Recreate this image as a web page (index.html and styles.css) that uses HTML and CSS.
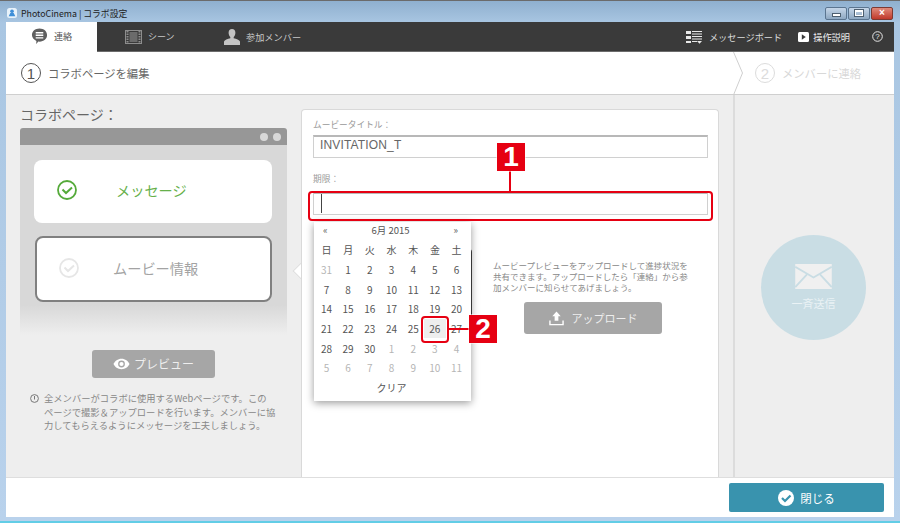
FILE: index.html
```html
<!DOCTYPE html>
<html lang="ja">
<head>
  <meta charset="utf-8"/>
  <title>PhotoCinema | コラボ設定</title>
  <link rel="stylesheet" href="styles.css">
</head>
<body>
<div class="window">
  <div class="titlebar">
    <div class="app-title">
      <svg class="app-icon" viewBox="0 0 12 12"><rect width="12" height="12" rx="3" fill="#e8f2fa"/><circle cx="6" cy="4" r="2.2" fill="#3f8fd8"/><path d="M2 10l2-4h4l2 4z" fill="#3f8fd8"/></svg>
      <span>PhotoCinema | コラボ設定</span>
    </div>
    <div class="win-buttons">
      <span class="win-btn"><i class="glyph-min"></i></span>
      <span class="win-btn"><i class="glyph-max"></i></span>
      <span class="win-btn win-close"><i>×</i></span>
    </div>
  </div>

  <div class="client">
    <nav class="tabs">
      <a class="tab tab-active tab-contact">
        <svg viewBox="0 0 18 18" width="17" height="17"><path d="M9 .5c4.6 0 8 2.900 8 7s-3.400 7-8 7c-.4 0-.8 0-1.200-.1L5.500 17l.2-3.200C3 12.500 1 10.300 1 7.500 1 3.400 4.400.5 9 .5z" fill="#5f5f5f"/><path d="M5 5h8M5 7.700h8M5 10.400h8" stroke="#fff" stroke-width="1.400"/></svg>
        連絡
      </a>
      <a class="tab tab-scene">
        <svg viewBox="0 0 17 14" width="17" height="14"><rect x=".5" y=".5" width="16" height="13" fill="#3a3a3a" stroke="#8d8d8d"/><rect x="4.500" y="2" width="8" height="10" fill="#6b6b6b"/><path d="M2.500 1v12M14.500 1v12" stroke="#8d8d8d" stroke-width="2" stroke-dasharray="1.500 1"/></svg>
        シーン
      </a>
      <a class="tab tab-member">
        <svg viewBox="0 0 16 16" width="16" height="16"><path d="M8 0c2.200 0 3.400 1.700 3.400 3.800 0 1.700-.8 3.300-1.700 4.200v1.300c2.600.6 5.800 1.800 6.300 3.300V16H0v-3.400c.5-1.500 3.700-2.700 6.300-3.300V8c-.9-.9-1.700-2.500-1.700-4.200C4.600 1.700 5.800 0 8 0z" fill="#c4c4c4"/></svg>
        参加メンバー
      </a>
      <div class="tabs-right">
        <a class="tool-link">
          <svg viewBox="0 0 16 14" width="16" height="14"><path d="M0 1h5v3H0zM0 6h5v3H0zM0 11h5v2H0z" fill="#e8e8e8"/><path d="M6 1.500h10M6 4h10M6 6.500h10M6 9h10M6 11.500h5" stroke="#e8e8e8"/><path d="M11 11h5l-2.500 2.800z" fill="#e8e8e8"/></svg>
          メッセージボード
        </a>
        <a class="tool-link tool-help">
          <svg viewBox="0 0 11 10" width="11" height="10"><rect width="11" height="10" rx="1.500" fill="#fff"/><path d="M3.800 2.300l4 2.700-4 2.700z" fill="#3a3a3a"/></svg>
          操作説明
        </a>
        <svg class="help-icon" viewBox="0 0 11 11" width="11" height="11"><circle cx="5.500" cy="5.500" r="4.800" fill="none" stroke="#e8e8e8"/><text x="5.500" y="8.300" text-anchor="middle" font-size="8" fill="#e8e8e8" font-family="Liberation Sans">?</text></svg>
      </div>
    </nav>

    <div class="steps">
      <div class="step step-now"><span class="step-num">1</span>コラボページを編集</div>
      <svg class="step-arrow" viewBox="0 0 10 43" width="10" height="43"><path d="M.5 0l9 21-9 22" fill="none" stroke="#cfcfcf"/></svg>
      <div class="step step-next"><span class="step-num">2</span>メンバーに連絡</div>
    </div>

    <main class="main">
      <section class="left">
        <h2 class="left-title">コラボページ：</h2>
        <div class="mock">
          <div class="mock-head"><i></i><i></i></div>
          <div class="mock-body">
            <div class="page-item page-done">
              <svg viewBox="0 0 20 20" width="20" height="20"><circle cx="10" cy="10" r="9" fill="none" stroke="#55aa3a" stroke-width="1.800"/><path d="M5.500 9.500l3.500 3.500 6-5.500" fill="none" stroke="#55aa3a" stroke-width="2"/></svg>
              <span>メッセージ</span>
            </div>
            <div class="page-item page-current">
              <svg viewBox="0 0 20 20" width="20" height="20"><circle cx="10" cy="10" r="9" fill="none" stroke="#e6e6e6" stroke-width="1.800"/><path d="M5.500 9.500l3.500 3.500 6-5.500" fill="none" stroke="#e6e6e6" stroke-width="2"/></svg>
              <span>ムービー情報</span>
            </div>
          </div>
        </div>
        <button class="btn btn-preview">
          <svg viewBox="0 0 18 12" width="17" height="12"><path d="M9 .5C5 .5 2 3 .5 6 2 9 5 11.500 9 11.500S16 9 17.500 6C16 3 13 .5 9 .5z" fill="#fff"/><circle cx="9" cy="6" r="3.600" fill="#a6a6a6"/><circle cx="9" cy="6" r="2.200" fill="#fff"/></svg>
          プレビュー
        </button>
        <div class="note">
          <svg viewBox="0 0 9 9" width="9" height="9"><circle cx="4.500" cy="4.500" r="3.900" fill="none" stroke="#777"/><path d="M4.500 2v3.500" stroke="#777"/></svg>
          <p>全メンバーがコラボに使用するWebページです。この<br>ページで撮影＆アップロードを行います。メンバーに協<br>力してもらえるようにメッセージを工夫しましょう。</p>
        </div>
        <i class="pointer"></i>
      </section>

      <section class="card">
        <label class="field-label">ムービータイトル：</label>
        <div class="field">INVITATION_T</div>
        <label class="field-label field-label-date">期限：</label>
        <div class="field field-date"><i class="caret"></i></div>

        <div class="upload-row">
          <div class="phone"></div>
          <div class="upload-side">
            <p>ムービープレビューをアップロードして進捗状況を共有できます。アップロードしたら「連絡」から参加メンバーに知らせてあげましょう。</p>
            <button class="btn btn-upload">
              <svg viewBox="0 0 16 15" width="15" height="15"><path d="M8 0l4.500 5H10v5H6V5H3.500z" fill="#fff"/><path d="M1 9.500V14h14V9.500" fill="none" stroke="#fff" stroke-width="1.500"/></svg>
              アップロード
            </button>
          </div>
        </div>

        <div class="calendar">
          <div class="cal-head"><span>«</span><span>6月 2015</span><span>»</span></div>
          <div class="cal-grid">
            <b>日</b><b>月</b><b>火</b><b>水</b><b>木</b><b>金</b><b>土</b>
            <span class="off">31</span><span>1</span><span>2</span><span>3</span><span>4</span><span>5</span><span>6</span>
            <span>7</span><span>8</span><span>9</span><span>10</span><span>11</span><span>12</span><span>13</span>
            <span>14</span><span>15</span><span>16</span><span>17</span><span>18</span><span>19</span><span>20</span>
            <span>21</span><span>22</span><span>23</span><span>24</span><span>25</span><span class="today">26</span><span>27</span>
            <span>28</span><span>29</span><span>30</span><span class="off">1</span><span class="off">2</span><span class="off">3</span><span class="off">4</span>
            <span class="off">5</span><span class="off">6</span><span class="off">7</span><span class="off">8</span><span class="off">9</span><span class="off">10</span><span class="off">11</span>
          </div>
          <div class="cal-clear">クリア</div>
        </div>
      </section>

      <aside class="right">
        <div class="send-all">
          <svg viewBox="0 0 38 26" width="37" height="25"><rect width="38" height="26" fill="#f0f0f0"/><path d="M0 3l19 11L38 3M0 24l12-13M38 24L26 11" fill="none" stroke="#c9dde4" stroke-width="2"/></svg>
          <span>一斉送信</span>
        </div>
      </aside>
    </main>

    <footer class="footer">
      <button class="btn-close">
        <svg viewBox="0 0 16 16" width="16" height="16"><circle cx="8" cy="8" r="8" fill="#fff"/><path d="M4 8l3 3 5.500-5.500" fill="none" stroke="#3993ae" stroke-width="2.200"/></svg>
        閉じる
      </button>
    </footer>
  </div>

  <!-- callouts drawn on top of the screenshot -->
  <div class="mark-box mark-date"></div>
  <div class="mark-line mark-line-1"></div>
  <div class="mark-num mark-num-1">1</div>
  <div class="mark-box mark-day"></div>
  <div class="mark-line mark-line-2"></div>
  <div class="mark-num mark-num-2">2</div>
</div>
</body>
</html>
```

FILE: styles.css
```css
* {
  box-sizing: border-box;
}

html, body {
  margin: 0;
  height: 100%;
  overflow: hidden;
}

body {
  font-family: "Noto Sans CJK JP", "Noto Sans", sans-serif;
  color: #555;
}

.window {
  position: relative;
  width: 900px;
  height: 523px;
  display: flex;
  flex-direction: column;
  padding: 0 6px 4px;
  background: linear-gradient(#8fb0cf 0, #a9c6e2 22px, #b9d2ec 100%);
  border-bottom: 2px solid #62cde6;
  border-top: 1px solid #6b6b6b;
}

.titlebar {
  height: 21px;
  flex: none;
  display: flex;
  align-items: center;
  justify-content: space-between;
}

.app-title {
  display: flex;
  align-items: center;
  gap: 4px;
  margin-top: 3px;
  font-size: 8.800px;
  color: #222;
}

.app-icon {
  width: 10px;
  height: 10px;
  margin-left: 1px;
}

.win-buttons {
  display: flex;
  gap: 1px;
  margin: 3px 0 0;
  padding-right: 1px;
}

.win-btn {
  width: 22px;
  height: 13px;
  display: flex;
  align-items: center;
  justify-content: center;
  border: 1px solid #5b7590;
  border-radius: 2px;
  background: linear-gradient(#c5d6e8, #8ea8c2);
}

.win-close {
  width: 22px;
  border-color: #7d3a32;
  background: linear-gradient(#e08a7a, #c0392b);
  color: #fff;
}

.win-close i {
  font: bold 10px/10px "Liberation Sans", sans-serif;
}

.glyph-min {
  width: 7px;
  height: 2px;
  margin-top: 4px;
  background: #fff;
  box-shadow: 0 0 0 1px #4d5f70;
}

.glyph-max {
  width: 8px;
  height: 6px;
  border: 1px solid #fff;
  border-top-width: 2px;
  box-shadow: 0 0 0 1px #4d5f70;
}

.client {
  flex: 1;
  min-height: 0;
  display: flex;
  flex-direction: column;
  background: #fff;
}

.tabs {
  height: 30px;
  flex: none;
  display: flex;
  background: #3a3a3a;
  border-bottom: 1px solid #6c6c6c;
  color: #c8c8c8;
  font-size: 9px;
}

.tab {
  display: flex;
  align-items: center;
  gap: 6px;
}

.tab-active {
  background: #fff;
  color: #555;
  border-bottom: 1px solid #fff;
  margin-bottom: -1px;
}

.tab-contact {
  width: 91px;
  padding-left: 25px;
}

.tab-scene {
  padding-left: 28px;
  width: 126px;
}

.tab-member {
  padding-left: 1px;
  font-size: 9.200px;
}

.tabs-right {
  margin-left: auto;
  display: flex;
  align-items: center;
  color: #ddd;
  font-size: 9.200px;
}

.tool-link {
  display: flex;
  align-items: center;
  gap: 7px;
}

.tool-help {
  margin-left: 16px;
  gap: 4px;
  color: #eee;
}

.help-icon {
  margin: 0 11px 0 22px;
}

.steps {
  height: 43px;
  flex: none;
  display: flex;
  align-items: center;
  position: relative;
  border-bottom: 1px solid #cfcfcf;
}

.step {
  display: flex;
  align-items: center;
  gap: 7px;
  font-size: 11.300px;
  color: #666;
}

.step-now {
  padding-left: 15px;
  width: 727px;
}

.step-arrow {
  flex: none;
  align-self: flex-start;
}

.step-next {
  margin-left: 12px;
  color: #d8d8d8;
}

.step-num {
  width: 20px;
  height: 20px;
  display: flex;
  align-items: center;
  justify-content: center;
  border: 1px solid #555;
  border-radius: 50%;
  font-size: 15px;
  font-family: "Liberation Sans", sans-serif;
  color: #555;
}

.step-next .step-num {
  border-color: #dcdcdc;
  color: #dcdcdc;
}

.main {
  flex: 1;
  min-height: 0;
  display: flex;
  background: #eee;
  border-bottom: 1px solid #dedede;
}

.left {
  position: relative;
  width: 295px;
  flex: none;
  padding: 10px 0 0 14px;
}

.left-title {
  margin: 0;
  font-size: 14px;
  line-height: 18px;
  font-weight: 400;
  color: #666;
}

.mock {
  width: 267px;
  margin-top: 5px;
}

.mock-head {
  height: 17px;
  display: flex;
  justify-content: flex-end;
  align-items: center;
  gap: 5px;
  padding-right: 6px;
  border-radius: 3px 3px 0 0;
  background: #979797;
}

.mock-head i {
  width: 8px;
  height: 8px;
  border-radius: 50%;
  background: #d8d8d8;
}

.mock-body {
  height: 190px;
  display: flex;
  flex-direction: column;
  gap: 13px;
  padding: 15px 15px 0 14px;
  background: linear-gradient(#d8d8d8 0, #d8d8d8 160px, #eee 100%);
}

.page-item {
  height: 63px;
  display: flex;
  align-items: center;
  padding-bottom: 3px;
  border-radius: 8px;
  background: #fff;
  font-size: 14.200px;
}

.page-item svg {
  margin-left: 23px;
}

.page-done span {
  margin-left: 39px;
  color: #66b04a;
}

.page-current {
  height: 66px;
  margin-left: 1px;
  border: 2px solid #808080;
  color: #a3a3a3;
}

.page-current span {
  margin-left: 34px;
}

.page-current svg {
  margin-left: 22px;
}

.btn {
  display: flex;
  align-items: center;
  justify-content: center;
  border: 0;
  border-radius: 3px;
  background: #a6a6a6;
  color: #eee;
  font-family: inherit;
}

.btn-preview {
  width: 123px;
  height: 28px;
  gap: 4px;
  margin: 15px 0 0 72px;
  padding-bottom: 2px;
  font-size: 12px;
}

.note {
  display: flex;
  gap: 5px;
  width: 260px;
  margin: 14px 0 0 10px;
}

.note svg {
  flex: none;
  margin-top: 2px;
}

.note p {
  margin: 0;
  font-size: 9.300px;
  line-height: 13.500px;
  color: #888;
}

.pointer {
  position: absolute;
  top: 170px;
  right: -6px;
  width: 12px;
  height: 12px;
  transform: rotate(45deg);
  background: #fff;
  border-left: 1px solid #ddd;
  border-bottom: 1px solid #ddd;
}

.card {
  position: relative;
  width: 418px;
  flex: none;
  margin-top: 14px;
  padding: 9px 10px 0 11px;
  background: #fff;
  border: 1px solid #d9d9d9;
  border-bottom: 0;
  border-radius: 4px 4px 0 0;
}

.field-label {
  display: block;
  font-size: 8.700px;
  line-height: 11px;
  color: #999;
}

.field-label-date {
  margin-top: 15px;
}

.field {
  height: 23px;
  margin-top: 5px;
  padding-left: 6px;
  border: 1px solid #d0d0d0;
  border-top: 2px solid #b8b8b8;
  font: 12px/17px "Liberation Sans", sans-serif;
  letter-spacing: .15px;
  color: #666;
}

.field-date {
  margin-top: 8px;
  padding-left: 7px;
}

.caret {
  display: block;
  width: 1px;
  height: 19px;
  background: #444;
}

.upload-row {
  display: flex;
  margin-top: 34px;
}

.phone {
  width: 134px;
  height: 90px;
  margin-left: 25px;
  flex: none;
  border: 2px solid #444;
  border-radius: 3px;
}

.upload-side {
  margin-left: 21px;
  width: 200px;
}

.upload-side p {
  margin: 11px 0 0;
  font-size: 8.500px;
  line-height: 11px;
  color: #888;
}

.btn-upload {
  width: 138px;
  height: 32px;
  gap: 8px;
  margin: 9px 0 0 31px;
  font-size: 11px;
}

.calendar {
  position: absolute;
  left: 12px;
  top: 112px;
  width: 157px;
  height: 179px;
  padding: 0 3px 0 1px;
  background: #fff;
  box-shadow: 0 2px 8px rgba(0, 0, 0, .4);
  font-size: 10px;
  color: #555;
}

.cal-head {
  height: 15px;
  padding: 0 10px 0 8px;
  display: flex;
  justify-content: space-between;
  align-items: center;
  font-size: 9.500px;
}

.cal-grid {
  display: grid;
  grid-template-columns: repeat(7, 21.700px);
  grid-auto-rows: 19.700px;
  justify-content: center;
  margin-top: 3px;
}

.cal-grid b,
.cal-grid span {
  display: flex;
  align-items: center;
  justify-content: center;
  font-weight: 400;
}

.cal-grid .off {
  color: #b5b5b5;
}

.cal-grid .today {
  background: #eee;
}

.cal-clear {
  text-align: center;
  margin-top: 2px;
}

.right {
  flex: 1;
  margin-left: 14px;
  border-left: 2px solid #dcdcdc;
  position: relative;
}

.send-all {
  position: absolute;
  left: 26px;
  top: 140px;
  width: 105px;
  height: 105px;
  display: flex;
  flex-direction: column;
  align-items: center;
  justify-content: center;
  gap: 6px;
  border-radius: 50%;
  background: #c9dde4;
  color: #eaf2f5;
  font-size: 11px;
}

.footer {
  height: 39px;
  flex: none;
  display: flex;
  justify-content: flex-end;
  align-items: center;
  padding-right: 10px;
}

.btn-close {
  width: 155px;
  height: 29px;
  display: flex;
  align-items: center;
  justify-content: center;
  gap: 6px;
  border: 0;
  border-radius: 2px;
  background: #3993ae;
  color: #fff;
  font-family: inherit;
  font-size: 11.500px;
}

.mark-box {
  position: absolute;
  border: 2px solid #e60012;
  border-radius: 4px;
}

.mark-date {
  left: 308px;
  top: 190px;
  width: 405px;
  height: 30px;
}

.mark-day {
  left: 421px;
  top: 315px;
  width: 28px;
  height: 27px;
}

.mark-line {
  position: absolute;
  background: #e60012;
}

.mark-line-1 {
  left: 509px;
  top: 170px;
  width: 2px;
  height: 20px;
}

.mark-line-2 {
  left: 449px;
  top: 327px;
  width: 21px;
  height: 2px;
}

.mark-num {
  position: absolute;
  width: 28px;
  height: 28px;
  background: #e60012;
  box-shadow: 0 0 0 1px rgba(255, 255, 255, .5);
  color: #fff;
  font: bold 28px/28px "Liberation Sans", sans-serif;
  text-align: center;
}

.mark-num-1 {
  left: 497px;
  top: 142px;
}

.mark-num-2 {
  left: 469px;
  top: 314px;
}
```
